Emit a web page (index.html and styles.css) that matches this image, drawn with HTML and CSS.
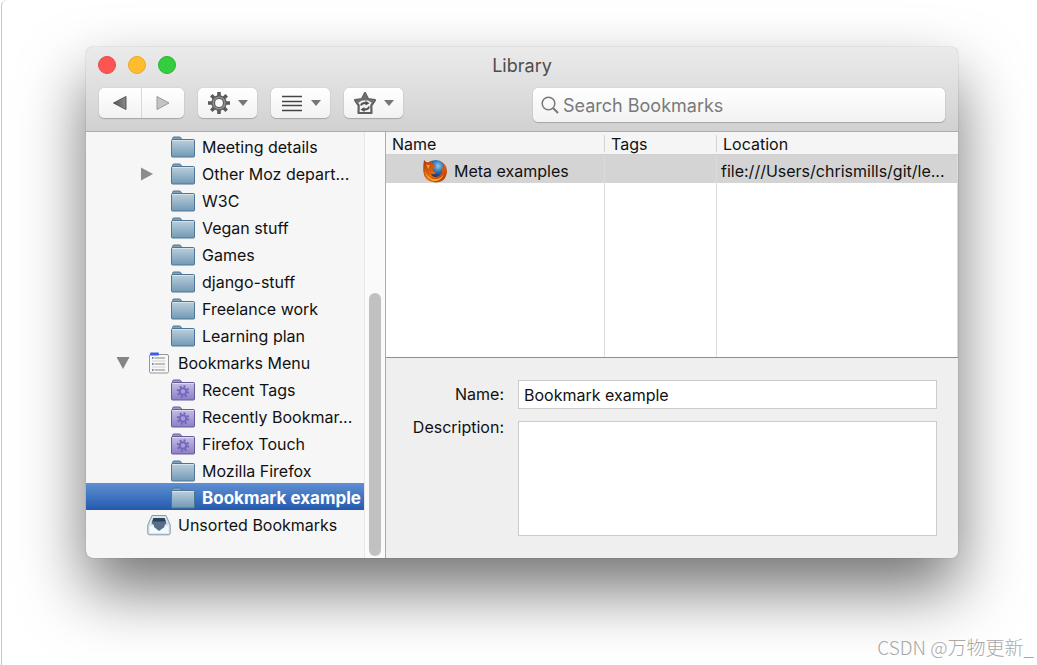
FILE: index.html
```html
<!DOCTYPE html>
<html lang="en">
<head>
    <meta charset="UTF-8">
    <meta name="viewport" content="width=device-width, initial-scale=1.0">
    <title>Library</title>

    <link rel="stylesheet" href="styles.css">
</head>

<body>
  <!-- shared icons -->
  <svg class="sprite" width="0" height="0" aria-hidden="true">
    <defs>
      <linearGradient id="blue" x1="0" y1="0" x2="0" y2="1">
        <stop offset="0" stop-color="#bdd0dc"/>
        <stop offset="1" stop-color="#7199b6"/>
      </linearGradient>
      <linearGradient id="purple" x1="0" y1="0" x2="0" y2="1">
        <stop offset="0" stop-color="#c6bee4"/>
        <stop offset="1" stop-color="#8c7ec6"/>
      </linearGradient>
      <linearGradient id="arrow" x1="0" y1="0" x2="1" y2="0">
        <stop offset="0" stop-color="#555"/>
        <stop offset="1" stop-color="#8a8a8a"/>
      </linearGradient>
      <radialGradient id="globe" cx="0.6" cy="0.3" r="0.6">
        <stop offset="0" stop-color="#8ccbf0"/>
        <stop offset="0.5" stop-color="#2c6fb4"/>
        <stop offset="1" stop-color="#152a60"/>
      </radialGradient>
      <linearGradient id="fire" x1="0" y1="0" x2="1" y2="1">
        <stop offset="0" stop-color="#a8330f"/>
        <stop offset="0.5" stop-color="#e86a10"/>
        <stop offset="1" stop-color="#a8280a"/>
      </linearGradient>
    </defs>
    <symbol id="folder" viewBox="0 0 24 22">
      <path d="M1.500 4V2.500Q1.500 1 3 1H8.500Q9.500 1 10 2L11 4Z" fill="#7fa3bc" stroke="#4e7593"/>
      <rect x="0.500" y="3.500" width="23" height="17.500" rx="1" fill="url(#blue)" stroke="#4e7593"/>
      <path d="M1.500 4.500H22.500" stroke="#d6e3eb"/>
    </symbol>
    <symbol id="smart" viewBox="0 0 24 22">
      <path d="M1.500 4V2.500Q1.500 1 3 1H8.500Q9.500 1 10 2L11 4Z" fill="#a196cf" stroke="#655b97"/>
      <rect x="0.500" y="3.500" width="23" height="17.500" rx="1" fill="url(#purple)" stroke="#655b97"/>
      <path d="M1.500 4.500H22.500" stroke="#ded9f0"/>
      <circle cx="12" cy="12.500" r="3.300" fill="none" stroke="#7266bd" stroke-width="2"/>
      <circle cx="12" cy="12.500" r="5.200" fill="none" stroke="#7266bd" stroke-width="2" stroke-dasharray="2 2.080"/>
    </symbol>
    <symbol id="menu" viewBox="0 0 24 22">
      <rect x="2.500" y="2.500" width="19" height="18.500" rx="1.500" fill="#f8f8f8" stroke="#969696"/>
      <rect x="3" y="0.500" width="9" height="3" rx="1" fill="#3c5ce8"/>
      <path d="M7.500 6H18M7.500 12H18M7.500 18H18" stroke="#858585"/>
      <path d="M5 9H18.500M5 15H18.500" stroke="#d2d2d2"/>
      <path d="M5 6H6.500M5 12H6.500M5 18H6.500" stroke="#3c5ca8" stroke-width="1.500"/>
    </symbol>
    <symbol id="tray" viewBox="0 0 24 22">
      <path d="M5 1.500H19L23.200 11V19Q23.200 20.800 21.500 20.800H2.500Q0.800 20.800 0.800 19V11Z" fill="#d9e5ee" stroke="#8598a8"/>
      <path d="M2.500 12H21.500V19H2.500Z" fill="#f5f9fb"/>
      <path d="M6.500 4H17.500L19.500 9.500L17.500 11V13L12 17L7 13V11L4.500 9.500Z" fill="#56708a"/>
      <path d="M6.500 4H17.500L18.800 7.500H5.200Z" fill="#2e4054"/>
    </symbol>
    <symbol id="drop" viewBox="0 0 10 6">
      <path d="M0 0H10L5 6Z" fill="#777"/>
    </symbol>
  </svg>

  <div class="page">
    <div class="window">
      <header class="top">
        <div class="titlebar">
          <div class="lights">
            <button class="light red" aria-label="Close"></button>
            <button class="light yellow" aria-label="Minimize"></button>
            <button class="light green" aria-label="Zoom"></button>
          </div>
          <h1>Library</h1>
        </div>
        <div class="toolbar">
          <div class="nav">
            <button aria-label="Back"><svg width="14" height="14" viewBox="0 0 14 14"><path d="M0.500 7L13 0.500V13.500Z" fill="url(#arrow)" stroke="#555"/></svg></button>
            <button aria-label="Forward"><svg width="14" height="14" viewBox="0 0 14 14"><path d="M13 7L1 0.500V13.500Z" fill="#c4c4c4" stroke="#9a9a9a"/></svg></button>
          </div>
          <button class="tool" aria-label="Organize">
            <svg width="24" height="24" viewBox="0 0 24 24">
              <path d="M12 6V1M12 18V23M6 12H1M18 12H23M7.500 7.500L4.300 4.300M16.500 7.500L19.700 4.300M7.500 16.500L4.300 19.700M16.500 16.500L19.700 19.700" stroke="#5a5a5a" stroke-width="3.600"/>
              <circle cx="12" cy="12" r="5.800" fill="#fafafa" stroke="#5a5a5a" stroke-width="3.800"/>
              <circle cx="12" cy="12" r="5.800" fill="none" stroke="#8e8e8e" stroke-width="1.600"/>
            </svg>
            <svg width="10" height="6"><use href="#drop"/></svg>
          </button>
          <button class="tool" aria-label="Views">
            <svg width="24" height="24" viewBox="0 0 24 24"><path d="M2 5.500H22M2 10.500H22M2 14.500H22M2 19.500H22" stroke="#454545" stroke-width="1.500"/></svg>
            <svg width="10" height="6"><use href="#drop"/></svg>
          </button>
          <button class="tool" aria-label="Import and Backup">
            <svg width="24" height="24" viewBox="0 0 24 24">
              <path d="M12 2L15 8L22 9.200L18.300 14.500L18.500 22H5.500L5.700 14.500L2 9.200L9 8Z" fill="#f4f4f4" stroke="#606060" stroke-width="2.200" stroke-linejoin="round"/>
              <path d="M12 1.500L15 8L22 9.200L19 12L15 9.500H9L5 12L2 9.200L9 8Z" fill="#707070"/>
              <path d="M8 14.500Q8.500 11.800 13 12M16 15.500Q15.500 18.800 11 18.500" fill="none" stroke="#505050" stroke-width="1.800"/>
              <path d="M12.500 9.800L16.500 12.200L12.500 14.500ZM11.500 16L7.500 18.500L11.500 21Z" fill="#505050"/>
            </svg>
            <svg width="10" height="6"><use href="#drop"/></svg>
          </button>
          <label class="search">
            <svg width="18" height="18" viewBox="0 0 18 18"><circle cx="7.500" cy="7.500" r="6.300" fill="none" stroke="#777" stroke-width="1.500"/><path d="M12 12L17 17" stroke="#777" stroke-width="2"/></svg>
            <input type="text" placeholder="Search Bookmarks" aria-label="Search Bookmarks">
          </label>
        </div>
      </header>

      <div class="content">
        <aside class="sidebar">
          <ul class="tree">
            <li class="sub"><svg class="icon"><use href="#folder"/></svg>Meeting details</li>
            <li class="sub"><button class="twisty" aria-label="Expand"><svg width="14" height="14" viewBox="0 0 14 14"><path d="M1 0.500L13 7L1 13.500Z" fill="#8c8c8c"/></svg></button><svg class="icon"><use href="#folder"/></svg>Other Moz depart...</li>
            <li class="sub"><svg class="icon"><use href="#folder"/></svg>W3C</li>
            <li class="sub"><svg class="icon"><use href="#folder"/></svg>Vegan stuff</li>
            <li class="sub"><svg class="icon"><use href="#folder"/></svg>Games</li>
            <li class="sub"><svg class="icon"><use href="#folder"/></svg>django-stuff</li>
            <li class="sub"><svg class="icon"><use href="#folder"/></svg>Freelance work</li>
            <li class="sub"><svg class="icon"><use href="#folder"/></svg>Learning plan</li>
            <li><button class="twisty" aria-label="Collapse"><svg width="14" height="12" viewBox="0 0 14 12"><path d="M0.500 0H13.500L7 12Z" fill="#858585"/></svg></button><svg class="icon"><use href="#menu"/></svg>Bookmarks Menu</li>
            <li class="sub"><svg class="icon"><use href="#smart"/></svg>Recent Tags</li>
            <li class="sub"><svg class="icon"><use href="#smart"/></svg>Recently Bookmar...</li>
            <li class="sub"><svg class="icon"><use href="#smart"/></svg>Firefox Touch</li>
            <li class="sub"><svg class="icon"><use href="#folder"/></svg>Mozilla Firefox</li>
            <li class="sub selected"><svg class="icon"><use href="#folder"/></svg>Bookmark example</li>
            <li><svg class="icon"><use href="#tray"/></svg>Unsorted Bookmarks</li>
          </ul>
          <div class="scrollbar"><div class="thumb"></div></div>
        </aside>

        <main class="main">
          <table class="list">
            <thead>
              <tr>
                <th class="col-name">Name</th>
                <th class="col-tags">Tags</th>
                <th>Location</th>
              </tr>
            </thead>
            <tbody>
              <tr class="current">
                <td>
                  <div class="bookmark">
                    <svg width="26" height="24" viewBox="0 0 26 24">
                      <circle cx="14" cy="11" r="10" fill="url(#globe)"/>
                      <path d="M2 1Q3.500 3 6 3.500Q8 1.800 10.500 1.500Q9.500 3.500 11 5.500L14 6.500Q14 8.500 10.500 10Q10.500 13 14.500 13.200Q11.500 16.500 8.500 14.500Q12 20 17 17Q21.500 14 20 7Q22 8.500 22 10.500Q23 6 19.500 2.500Q25 6 25 12.500Q24 23.500 13 23.500Q2 22.500 1.200 12Q1 6 2 1Z" fill="url(#fire)"/>
                      <path d="M3 8Q2.500 16 9 19.500Q17 22.500 22 15Q18 24 10 21.500Q2 18 3 8Z" fill="#f9b42b"/>
                      <path d="M4 4.500Q5 6.500 8 6L6 10Z" fill="#f6a51f"/>
                    </svg>
                    Meta examples
                  </div>
                </td>
                <td></td>
                <td>file:///Users/chrismills/git/le...</td>
              </tr>
              <tr class="empty">
                <td></td>
                <td></td>
                <td></td>
              </tr>
            </tbody>
          </table>

          <form class="details">
            <label for="name">Name:</label>
            <input type="text" id="name" value="Bookmark example">
            <label for="description">Description:</label>
            <textarea id="description"></textarea>
          </form>
        </main>
      </div>
    </div>

    <div class="watermark">CSDN @万物更新_</div>
  </div>
</body>
</html>
```
FILE: styles.css
```css
* {
  box-sizing: border-box;
}

body {
  margin: 0;
  background: #fff;
  color: #111;
  font-family: Inter, "Noto Sans CJK SC", sans-serif;
  font-size: 16px;
}

button {
  margin: 0;
  padding: 0;
  border: 0;
  background: none;
}

svg {
  display: block;
  flex: none;
}

.sprite {
  position: absolute;
}

.page {
  display: flex;
  flex-direction: column;
  min-height: 100vh;
  margin-left: 1px;
  padding: 47px 79px 0 84px;
  border-left: 1px solid #c6c6c6;
  border-top-left-radius: 6px;
}

.window {
  border-radius: 7px;
  background: #f6f6f6;
  box-shadow: 0 0 1px rgba(0, 0, 0, 0.5), 0 32px 64px rgba(0, 0, 0, 0.55);
}

/* title bar and toolbar */
.top {
  border-bottom: 1px solid #adadad;
  border-radius: 7px 7px 0 0;
  background: linear-gradient(#ebebeb, #d1d1d1);
}

.titlebar {
  display: grid;
  grid-template-columns: 1fr auto 1fr;
  align-items: center;
  height: 36px;
  padding: 0 12px;
}

.lights {
  display: flex;
  gap: 12px;
}

.light {
  width: 18px;
  height: 18px;
  border-radius: 50%;
}

.red {
  background: #ff5552;
  border: 1px solid #e8484a;
}

.yellow {
  background: #ffbd2e;
  border: 1px solid #e8a92a;
}

.green {
  background: #35cd40;
  border: 1px solid #27b532;
}

h1 {
  margin: 0;
  color: #4d4d4d;
  font-size: 18px;
  font-weight: 400;
}

.toolbar {
  display: flex;
  align-items: flex-start;
  gap: 14px;
  padding: 5px 13px 9px;
}

.nav,
.tool,
.search {
  border-radius: 5px;
  background: linear-gradient(#fff, #f2f2f2);
  box-shadow: 0 0 1px rgba(0, 0, 0, 0.3), 0 1px 1px rgba(0, 0, 0, 0.2);
}

.nav {
  display: flex;
  width: 85px;
  height: 30px;
}

.nav button {
  display: flex;
  flex: 1;
  align-items: center;
  justify-content: center;
}

.nav button + button {
  border-left: 1px solid #d8d8d8;
}

.tool {
  display: flex;
  align-items: center;
  justify-content: center;
  gap: 7px;
  width: 59px;
  height: 30px;
}

.search {
  display: flex;
  flex: 1;
  align-items: center;
  gap: 4px;
  height: 34px;
  margin-left: 116px;
  padding: 0 8px;
}

.search input {
  flex: 1;
  min-width: 0;
  padding: 0;
  border: 0;
  outline: 0;
  background: none;
  font-family: inherit;
  font-size: 18px;
}

.search input::placeholder {
  color: #7a7a7a;
}

.content {
  display: flex;
}

/* folder tree */
.sidebar {
  display: flex;
  width: 300px;
  border-right: 1px solid #acacac;
}

.tree {
  flex: 1;
  margin: 0;
  padding: 0 0 21px;
  list-style: none;
}

.tree li {
  display: flex;
  align-items: center;
  height: 27px;
  padding-top: 2px;
  padding-left: 61px;
  white-space: nowrap;
}

.tree .sub {
  padding-left: 85px;
}

.twisty {
  width: 14px;
  margin-left: -31px;
  margin-right: 17px;
}

.icon {
  width: 24px;
  height: 22px;
  margin-right: 7px;
}

.tree .selected {
  background: linear-gradient(#5f8fd3, #2459ae);
  color: #fff;
  font-size: 17px;
  font-weight: 700;
}

.scrollbar {
  display: flex;
  align-items: flex-end;
  width: 21px;
  padding: 0 4px 2px;
  border-left: 1px solid #e6e6e6;
  background: #fafafa;
}

.thumb {
  width: 12px;
  height: 62%;
  border-radius: 6px;
  background: #c1c1c1;
}

/* bookmark list */
.main {
  display: flex;
  flex: 1;
  flex-direction: column;
  min-width: 0;
}

.list {
  flex: 1;
  width: 100%;
  border-bottom: 1px solid #8e8e8e;
  border-spacing: 0;
  table-layout: fixed;
  background: #fff;
}

.list th {
  height: 23px;
  padding: 2px 6px 0;
  border-bottom: 1px solid #d0d0d0;
  background: linear-gradient(#d4d4d4, #d4d4d4) right center / 1px 17px no-repeat #f5f5f5;
  font-weight: 400;
  line-height: 20px;
  text-align: left;
}

.list th:last-child {
  background: #f5f5f5;
}

.col-name {
  width: 219px;
}

.col-tags {
  width: 112px;
}

.list td {
  padding: 0 4px;
  border-right: 1px solid #dcdcdc;
  white-space: nowrap;
}

.list .current td {
  height: 28px;
  padding-top: 3px;
  background: #d4d4d4;
}

.empty td {
  height: 174px;
}

.bookmark {
  display: flex;
  align-items: center;
  gap: 6px;
  padding-left: 32px;
}

/* details of the selected item */
.details {
  display: grid;
  grid-template-columns: 118px 1fr;
  gap: 12px 14px;
  padding: 22px 21px;
  padding-left: 0;
  border-radius: 0 0 7px 0;
  background: #efefef;
}

.details label {
  line-height: 29px;
  text-align: right;
}

.details label:last-of-type {
  line-height: 12px;
}

.details input,
.details textarea {
  width: 100%;
  height: 29px;
  padding: 0 5px;
  border: 1px solid #cbcbcb;
  background: #fff;
  color: inherit;
  font-family: inherit;
  font-size: 16px;
}

.details textarea {
  height: 115px;
  resize: none;
}

.watermark {
  margin: auto -76px 4px auto;
  color: #a8a8a8;
  font-family: "Noto Sans CJK SC", sans-serif;
  font-size: 19px;
  font-weight: 300;
  line-height: 28px;
}
```
